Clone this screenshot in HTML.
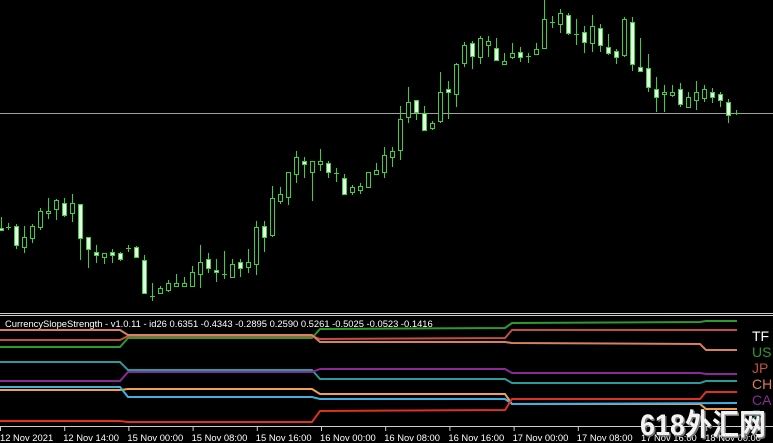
<!DOCTYPE html>
<html><head><meta charset="utf-8"><style>
html,body{margin:0;padding:0;background:#000;width:773px;height:443px;overflow:hidden}
svg{display:block}
text{font-family:"Liberation Sans","Noto Sans CJK SC",sans-serif}
</style></head><body>
<svg id="s" width="773" height="443" xmlns="http://www.w3.org/2000/svg">
<rect width="773" height="443" fill="#000"/>
<line x1="0" y1="113.5" x2="773" y2="113.5" stroke="#a0a0a0" stroke-width="1"/>
<g id="c"></g>
<line x1="0" y1="313.5" x2="773" y2="313.5" stroke="#d0d0d0"/>
<line x1="0" y1="315.5" x2="773" y2="315.5" stroke="#d0d0d0"/>
<text x="5" y="327" font-size="9.4" fill="#fff">CurrencySlopeStrength - v1.0.11 - id26 0.6351 -0.4343 -0.2895 0.2590 0.5261 -0.5025 -0.0523 -0.1416</text>
<g fill="none" stroke-width="2">
<polyline stroke="#2e9a2e" points="0,347 120,347 128,338 312,338 320,329 505,328 512,323 700,322 706,321 737,321"/>
<polyline stroke="#c05040" points="0,340 120,340 128,336 312,336 320,339 505,338 512,330 737,330"/>
<polyline stroke="#d88060" points="0,330 120,330 128,335 312,335 320,342 505,342 512,343 700,344 706,350 737,350"/>
<polyline stroke="#2a9a9a" points="0,362 120,362 128,370 312,370 320,379 505,379 512,383 700,383 706,381 737,381"/>
<polyline stroke="#8a2a9a" points="0,381 120,381 128,372 312,372 320,369 505,369 512,373 700,373 706,374 737,374"/>
<polyline stroke="#f0a050" points="0,390 120,390 128,389 312,389 320,394 505,394 512,404 700,404 706,409 737,409"/>
<polyline stroke="#40b0e0" points="0,387 120,387 128,397 312,397 320,399 505,399 512,404 737,403"/>
<polyline stroke="#e03020" points="0,421 120,421 128,422 312,422 320,411 505,410 512,399 700,399 706,392 737,392"/>
</g>
<g font-size="14">
<text x="752" y="341" fill="#fff">TF</text>
<text x="752" y="357" fill="#2e9a2e">US</text>
<text x="752" y="373" fill="#c05040">JP</text>
<text x="752" y="389" fill="#d88060">CH</text>
<text x="752" y="405" fill="#8a2a9a">CA</text>
<text x="752" y="420" fill="#2a9a9a">Z</text>
</g>
<line x1="0" y1="426.5" x2="773" y2="426.5" stroke="#d0d0d0"/>
<g id="t" font-size="9.4" fill="#fff"></g>
<text x="640" y="435" font-size="30" font-weight="bold" fill="#777" transform="translate(1.5,1.5)" textLength="126" lengthAdjust="spacingAndGlyphs">618外汇网</text>
<text x="640" y="435" font-size="30" font-weight="bold" fill="#f2f2f2" textLength="126" lengthAdjust="spacingAndGlyphs">618外汇网</text>
</svg>
<script>
var d=[
[1,217,228,230,230,1],[8,223,227,227,230,0],[16,224,226,245,249,1],[24,226,237,247,253,0],[32,224,226,238,243,0],
[40,208,211,227,230,0],[48,198,211,213,219,0],[56,199,200,209,220,0],[64,198,203,215,217,1],[72,194,203,213,222,0],
[80,204,204,238,260,1],[88,237,237,249,268,1],[96,245,252,255,263,1],[104,253,253,257,264,0],[112,249,252,255,263,1],
[120,252,253,259,261,1],[128,245,248,248,252,0],[136,246,247,257,258,1],[144,255,260,293,294,1],[152,283,296,296,301,0],
[160,286,288,293,294,0],[168,280,283,290,292,0],[176,274,283,286,286,0],[184,277,283,286,286,0],[192,266,272,286,287,0],
[200,245,262,274,288,0],[208,253,259,268,273,1],[216,259,270,272,282,1],[224,251,274,274,279,0],[232,259,264,277,277,0],
[240,259,262,268,277,1],[248,249,262,267,273,0],[256,221,227,264,275,0],[264,221,226,237,252,1],[272,186,198,235,237,0],
[280,187,194,201,204,0],[288,172,172,197,205,0],[296,151,157,174,183,0],[304,157,161,164,178,1],[312,161,161,172,201,0],
[320,149,161,164,171,0],[328,161,163,172,178,1],[336,168,173,173,182,0],[344,174,178,194,195,1],[352,185,187,192,195,0],
[360,183,186,190,194,0],[368,172,172,187,188,0],[376,163,170,174,175,0],[384,147,155,172,178,0],[392,147,151,157,167,0],
[400,106,119,150,160,0],[408,87,102,117,123,0],[416,100,100,112,120,1],[424,106,113,130,131,1],[432,121,123,128,130,0],
[440,72,92,121,123,0],[448,81,89,92,119,1],[456,63,64,94,107,0],[464,42,45,63,67,0],[472,41,43,56,69,1],
[480,36,38,57,64,0],[488,36,41,45,57,0],[496,38,48,60,61,1],[504,53,61,64,65,0],[512,43,53,57,59,0],
[520,47,52,57,62,1],[528,53,56,56,63,0],[536,43,49,54,55,0],[544,0,19,48,49,0],[552,16,22,22,28,0],
[560,9,13,24,33,0],[568,13,15,33,35,1],[576,19,34,34,45,0],[584,26,32,42,53,1],[592,15,26,43,52,0],
[600,24,28,45,52,1],[608,34,47,53,55,1],[616,49,51,57,64,1],[624,17,19,55,57,0],[632,17,22,64,71,1],
[640,38,67,71,72,1],[648,54,68,87,92,1],[656,77,89,97,112,1],[664,85,92,94,112,0],[672,85,92,95,97,0],
[680,83,89,104,107,1],[688,92,97,107,107,0],[696,81,92,100,110,0],[704,85,89,98,102,0],[712,88,92,97,103,1],
[720,92,94,100,107,1],[728,99,102,115,123,1],[736,110,113,113,115,0]];
var g=document.getElementById('c'),h='';
d.forEach(function(c){var x=c[0];h+='<line x1="'+(x+.5)+'" y1="'+c[1]+'" x2="'+(x+.5)+'" y2="'+c[4]+'" stroke="#3ad23a"/>';
var bh=c[3]-c[2];if(bh<1){h+='<line x1="'+(x-2)+'" y1="'+(c[2]+.5)+'" x2="'+(x+3)+'" y2="'+(c[2]+.5)+'" stroke="#3ad23a"/>';}
else h+='<rect x="'+(x-1.5)+'" y="'+(c[2]+.5)+'" width="4" height="'+bh+'" fill="'+(c[5]?'#e6ffe6':'#000')+'" stroke="#3ad23a"/>';});
g.innerHTML=h;
var L=["12 Nov 2021","12 Nov 14:00","15 Nov 00:00","15 Nov 08:00","15 Nov 16:00","16 Nov 00:00","16 Nov 08:00","16 Nov 16:00","17 Nov 00:00","17 Nov 08:00","17 Nov 16:00","18 Nov 00:00"];
var t=document.getElementById('t'),s='';
L.forEach(function(l,i){var x=i*64.2;s+='<line x1="'+(x+.5)+'" y1="426" x2="'+(x+.5)+'" y2="431" stroke="#d0d0d0"/><text x="'+(x+(i?-1:0))+'" y="441">'+l+'</text>';});
t.innerHTML=s;
</script>
</body></html>
